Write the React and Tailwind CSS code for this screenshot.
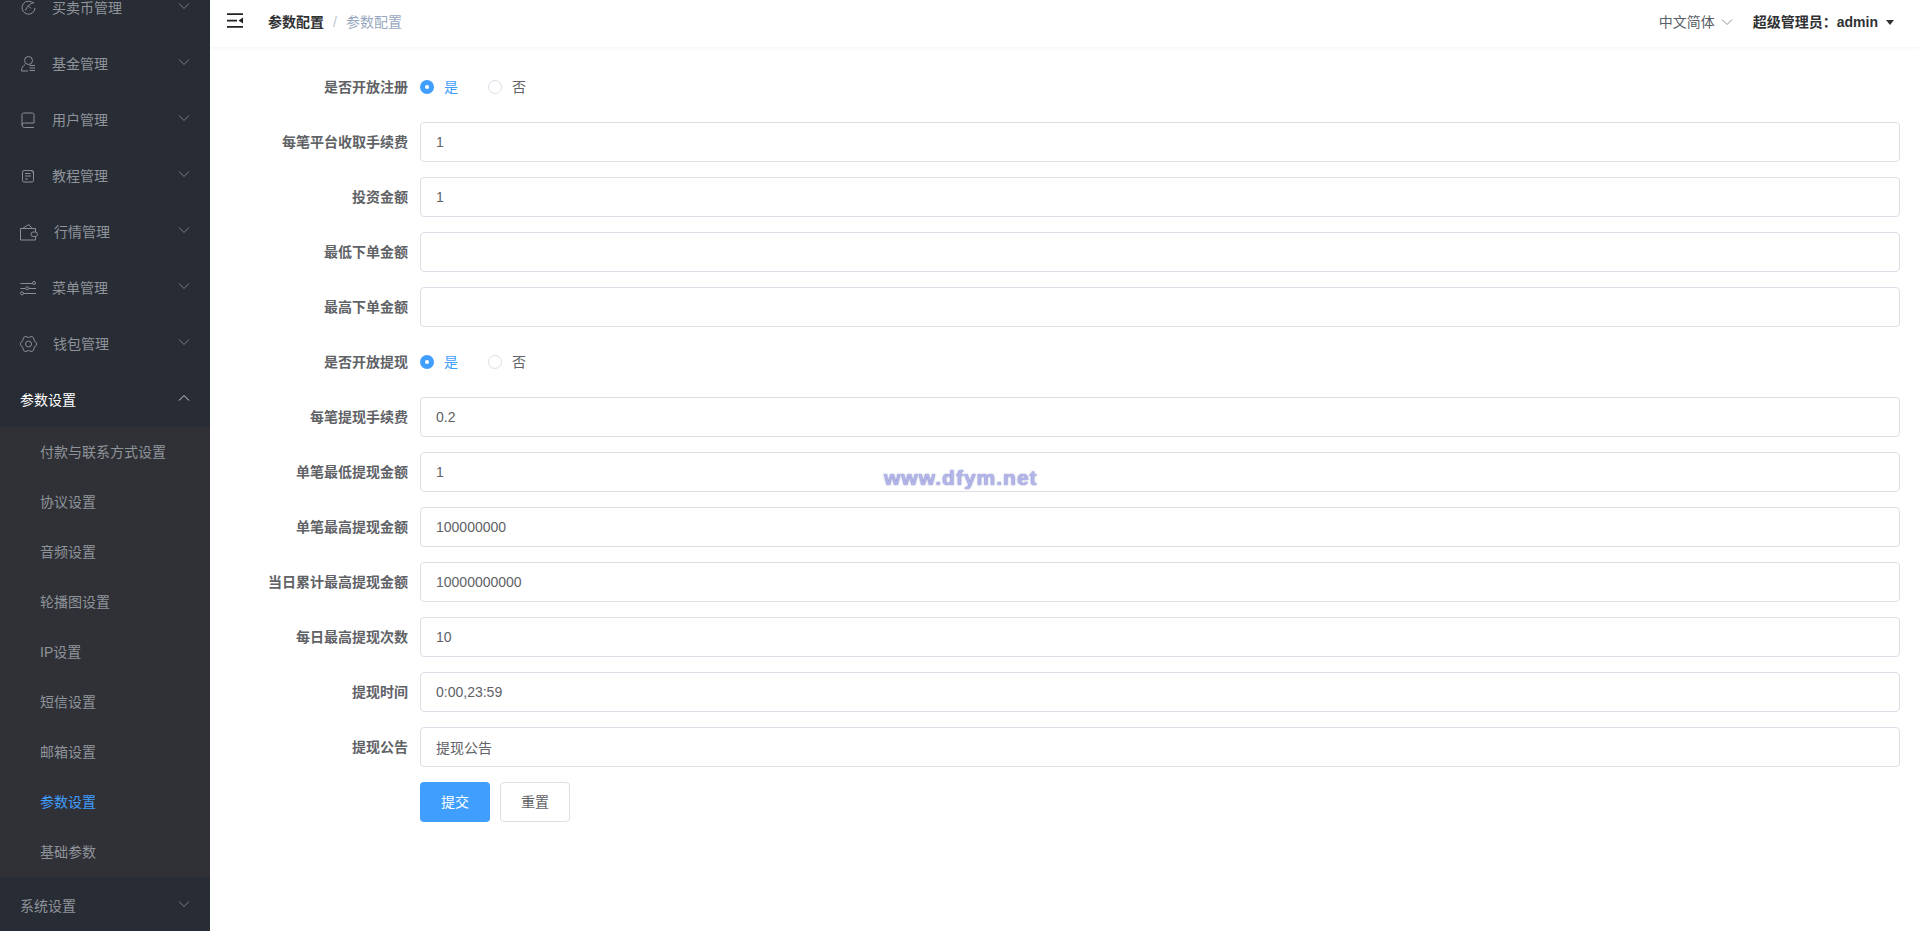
import React from "react";

const Chevron = ({ up, className = "" }) => (
  <svg width="12" height="12" viewBox="0 0 12 12" fill="none" stroke="currentColor" strokeWidth="1" className={className}>
    {up ? <path d="M1 8.500 6 3.500l5 5" /> : <path d="M1 3.500l5 5 5-5" />}
  </svg>
);

const S = ({ children }) => (
  <svg width="20" height="20" viewBox="0 0 20 20" fill="none" stroke="currentColor" strokeWidth="1" className="shrink-0 overflow-visible text-[#8a8e94]">
    {children}
  </svg>
);

const icons = {
  trade: <S><path d="M13.500 5.500A6.500 6.500 0 1 0 15 10" /><path d="M5.500 12.500c1-3.500 4-6.500 8.500-8.500M8 7.500l3 3" /></S>,
  fund: <S><circle cx="8.500" cy="6.500" r="4" /><path d="M5 10.500c-2 1.500-3.500 3-3.500 6.500H8" /><path d="M9.500 11.500H15M9.500 14H15M9.500 16.500H15" /></S>,
  user: <S><path d="M14 13V4.500A1.500 1.500 0 0 0 12.500 3h-9A1.500 1.500 0 0 0 2 4.500V15a2.500 2.500 0 0 0 2.500 2.500H14M14 13H4.500A2.250 2.250 0 0 0 2 15" /></S>,
  course: <S><rect x="2.500" y="4.500" width="11" height="11.500" rx="1.500" /><path d="M5 7.500h5.500M5 10h6M5 13h3" /><path d="M11 4.500 13.500 7" /></S>,
  market: <S><path d="M15.500 10V6.500h-15V18h15v-3.500" /><path d="M2.500 6.500 9 2.500l3 4" /><rect x="11" y="10" width="6.500" height="4.500" rx="2.200" /></S>,
  menu: <S><path d="M.5 5.500h12M15.500 5.500h.5M.5 10.500h5M9 10.500h7M3.500 15.500H16" /><circle cx="14" cy="5" r="1.500" /><circle cx="7.200" cy="10.300" r="1.500" /><circle cx="2" cy="15.300" r="1.500" /></S>,
  wallet: <S><path d="M14.130 13.250Q14 19.530 8.500 16.500 3 19.530 2.870 13.250-2.500 10 2.870 6.750 3 .47 8.500 3.500 14 .47 14.130 6.750 19.500 10 14.130 13.250z" strokeLinejoin="round" /><circle cx="8.500" cy="10" r="3" /></S>,
};

const menus = [
  ["买卖币管理", "trade", "ml-3"],
  ["基金管理", "fund", "ml-3"],
  ["用户管理", "user", "ml-3"],
  ["教程管理", "course", "ml-3"],
  ["行情管理", "market", "ml-[14px]"],
  ["菜单管理", "menu", "ml-3"],
  ["钱包管理", "wallet", "ml-[13px]"],
];
const subs = ["付款与联系方式设置", "协议设置", "音频设置", "轮播图设置", "IP设置", "短信设置", "邮箱设置", "参数设置", "基础参数"];

const fields = [
  ["是否开放注册", "radio"],
  ["每笔平台收取手续费", "1"],
  ["投资金额", "1"],
  ["最低下单金额", ""],
  ["最高下单金额", ""],
  ["是否开放提现", "radio"],
  ["每笔提现手续费", "0.2"],
  ["单笔最低提现金额", "1"],
  ["单笔最高提现金额", "100000000"],
  ["当日累计最高提现金额", "10000000000"],
  ["每日最高提现次数", "10"],
  ["提现时间", "0:00,23:59"],
  ["提现公告", "提现公告"],
];

const font = "font-['Liberation_Sans','Noto_Sans_CJK_SC',sans-serif]";

function Row({ label, children }) {
  return (
    <div className="mb-[15px] flex h-10 items-center">
      <label className="w-[210px] shrink-0 pr-3 text-right text-sm font-bold text-[#606266]">{label}</label>
      <div className="flex min-w-0 flex-1 items-center">{children}</div>
    </div>
  );
}

function Radios() {
  return (
    <div className="flex items-center text-sm">
      <span className="flex h-3.5 w-3.5 items-center justify-center rounded-full bg-[#409eff]">
        <span className="h-1 w-1 rounded-full bg-white" />
      </span>
      <span className="ml-[10px] text-[#409eff]">是</span>
      <span className="ml-[30px] h-3.5 w-3.5 rounded-full border border-[#dcdfe6] bg-white" />
      <span className="ml-[10px] text-[#606266]">否</span>
    </div>
  );
}

export default function App() {
  return (
    <div className={`relative flex h-[931px] w-full overflow-hidden bg-white ${font}`}>
      <aside className="w-[210px] shrink-0 overflow-hidden bg-[#282c34] text-sm">
        <div className="-mt-[20px]">
          {menus.map(([name, icon, ml]) => (
            <div key={name} className="flex h-14 items-center pl-5 pr-5 text-[#8f949b]">
              {icons[icon]}
              <span className={ml}>{name}</span>
              <Chevron className="relative -top-[2px] ml-auto text-[#7b8087]" />
            </div>
          ))}
          <div className="flex h-[55px] items-center pl-5 pr-5 pt-px text-white">
            <span>参数设置</span>
            <Chevron up className="relative -top-[2px] ml-auto text-[#d5d7da]" />
          </div>
          <div className="bg-[#2f3136]">
            {subs.map((s) => (
              <div key={s} className={`flex h-[50px] items-center pl-10 ${s === "参数设置" ? "text-[#409eff]" : "text-[#8f949b]"}`}>
                {s}
              </div>
            ))}
          </div>
          <div className="flex h-14 items-center pl-5 pr-5 pt-0.5 text-[#8f949b]">
            <span>系统设置</span>
            <Chevron className="relative -top-[2px] ml-auto text-[#7b8087]" />
          </div>
        </div>
      </aside>

      <main className="min-w-0 flex-1">
        <header className="flex h-[47px] items-center pb-[3px] shadow-[0_1px_4px_rgba(0,21,41,0.05)]">
          <svg width="17" height="15" viewBox="0 0 17 15" className="mb-[3px] ml-[17px] shrink-0 text-[#222]" fill="currentColor">
            <path d="M0 .2h16V2H0zM0 6.700h10V8.500H0zM0 13h16v1.800H0zM16 4.500v6l-4.500-3z" />
          </svg>
          <span className="ml-[24px] text-sm font-bold text-[#303133]">参数配置</span>
          <span className="ml-[9px] text-sm text-[#c0c4cc]">/</span>
          <span className="ml-[9px] text-sm text-[#97a8be]">参数配置</span>
          <span className="ml-auto text-sm text-[#5a5e66]">中文简体</span>
          <Chevron className="ml-[6px] text-[#909399]" />
          <span className="ml-[20px] text-sm font-bold text-[#303133]">超级管理员：admin</span>
          <span className="ml-[8px] mr-[26px] h-0 w-0 border-x-[4px] border-t-[5px] border-x-transparent border-t-[#303133]" />
        </header>

        <form className="pr-5 pt-5">
          {fields.map(([label, v]) => (
            <Row key={label} label={label}>
              {v === "radio" ? (
                <Radios />
              ) : (
                <input
                  readOnly
                  value={v}
                  className="h-10 w-full rounded border border-[#dcdfe6] bg-white px-[15px] text-sm text-[#606266] outline-none"
                />
              )}
            </Row>
          ))}
          <div className="ml-[210px] flex gap-[10px]">
            <button type="button" className="h-10 w-[70px] rounded bg-[#409eff] text-sm text-white">提交</button>
            <button type="button" className="h-10 w-[70px] rounded border border-[#dcdfe6] bg-white text-sm text-[#606266]">重置</button>
          </div>
        </form>
      </main>

      <div className="absolute left-[884px] top-[466px] text-[21px] font-bold leading-6 tracking-[1px] text-[#b3b5ea] [text-shadow:0_0_1.500px_#6468b0]">
        www.dfym.net
      </div>
    </div>
  );
}
